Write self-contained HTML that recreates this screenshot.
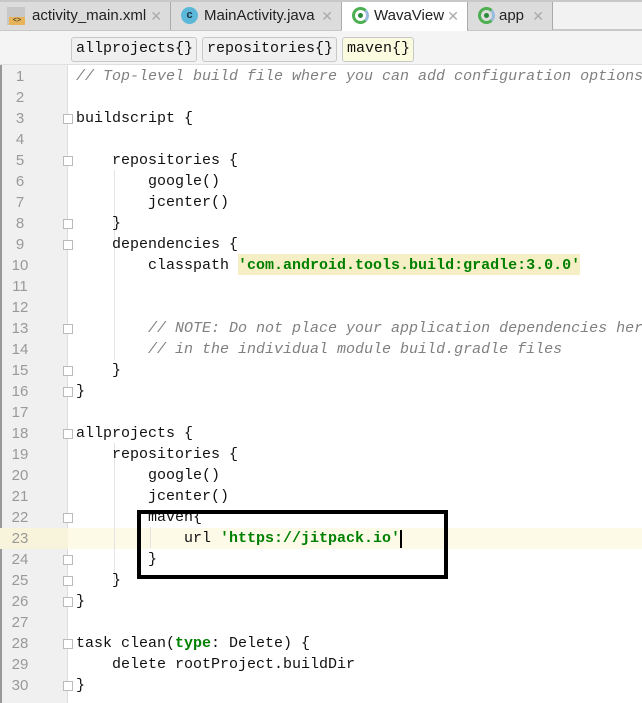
<!DOCTYPE html>
<html><head><meta charset="utf-8"><style>
*{margin:0;padding:0;box-sizing:border-box}
body{width:642px;height:703px;overflow:hidden;background:#fff;position:relative;font-family:"Liberation Mono",monospace}
.tabs{position:absolute;left:0;top:0;width:642px;height:31px;background:#f2f2f2;border-top:2px solid #c8c8c8;border-bottom:2px solid #c8c8c8}
.tab{position:absolute;top:0;height:28px;background:#dcdcdc;border-right:1px solid #aaa;font:15px "Liberation Sans",sans-serif;color:#222;line-height:28px}
.tab .x{color:#aaa;font-size:14px;position:absolute;right:8px;top:0}
.crumbs{position:absolute;left:0;top:31px;width:642px;height:34px;background:#f4f4f4;border-bottom:1px solid #e0e0e0}
.cb{position:absolute;top:6px;height:25px;border:1px solid #c8c8c8;border-radius:3px;background:#f0f0f0;font-size:15px;line-height:22px;padding-left:4px;color:#111}
.gut{position:absolute;left:0;top:65px;width:68px;height:638px;background:#f0f0f0;border-left:2px solid #999;border-right:1px solid #ddd}
.ln{position:absolute;left:0;width:40px;text-align:center;font:15px "Liberation Sans",sans-serif;color:#999;height:21px;line-height:21px}
.code{position:absolute;left:76px;white-space:pre;font-size:15px;line-height:21px;height:21px;color:#111}
.c{color:#808080;font-style:italic}
.s{color:#008000;font-weight:bold}
.fold{position:absolute;left:63px;width:10px;height:10px;border:1px solid #bbb;background:#fff}
.guide{position:absolute;width:1px;background:#e4e4e4}
</style></head><body>
<div class="tabs">
 <div class="tab" style="left:0;width:171px"><span style="position:absolute;left:7px;top:5px;width:18px;height:18px;background:#c8c8c8"></span><span style="position:absolute;left:9px;top:15px;width:16px;height:8px;background:#e8b45a;font-size:7px;line-height:8px;text-align:center">&lt;&gt;</span><span style="position:absolute;left:32px">activity_main.xml</span><span class="x">✕</span></div>
 <div class="tab" style="left:171px;width:171px"><span style="position:absolute;left:10px;top:5px;width:17px;height:17px;border-radius:50%;background:#5bb8d8;color:#234;font-size:11px;line-height:17px;text-align:center;font-weight:bold">c</span><span style="position:absolute;left:33px">MainActivity.java</span><span class="x">✕</span></div>
 <div class="tab" style="left:342px;width:126px;background:#fff;height:30px"><span style="position:absolute;left:10px;top:5px;width:17px;height:17px;border-radius:50%;border:3px solid #4caf50;border-right-color:#9bd"></span><span style="position:absolute;left:16px;top:11px;width:5px;height:5px;border-radius:50%;background:#2a8a3a"></span><span style="position:absolute;left:32px">WavaView</span><span class="x">✕</span></div>
 <div class="tab" style="left:468px;width:85px"><span style="position:absolute;left:10px;top:5px;width:17px;height:17px;border-radius:50%;border:3px solid #4caf50;border-right-color:#9bd"></span><span style="position:absolute;left:16px;top:11px;width:5px;height:5px;border-radius:50%;background:#2a8a3a"></span><span style="position:absolute;left:31px">app</span><span class="x">✕</span></div>
</div>
<div class="crumbs">
 <div class="cb" style="left:71px;width:126px">allprojects{}</div>
 <div class="cb" style="left:202px;width:135px">repositories{}</div>
 <div class="cb" style="left:342px;width:72px;background:#fbfbe0">maven{}</div>
</div>
<div class="gut"></div>
<div style="position:absolute;left:0;top:528px;width:642px;height:21px;background:#fdfbe8"></div>
<div style="position:absolute;left:0;top:528px;width:68px;height:21px;background:#f8f4dc"></div>
<div style="position:absolute;left:238px;top:254px;width:342px;height:21px;background:#f6efc6"></div>
<div class="guide" style="left:114px;top:443px;height:140px"></div>
<div class="guide" style="left:114px;top:170px;height:190px"></div>
<div class="guide" style="left:150px;top:527px;height:21px"></div>
<div id="L"></div>
<div style="position:absolute;left:137px;top:510px;width:311px;height:69px;border:4px solid #000"></div>
<div style="position:absolute;left:400px;top:530px;width:2px;height:18px;background:#000"></div>
<script>
var lines=[
'<span class="c">// Top-level build file where you can add configuration options</span>','',
'buildscript {','',
'    repositories {','        google()','        jcenter()','    }','    dependencies {',
'        classpath <span class="s">\'com.android.tools.build:gradle:3.0.0\'</span>','','',
'        <span class="c">// NOTE: Do not place your application dependencies here</span>',
'        <span class="c">// in the individual module build.gradle files</span>','    }','}','',
'allprojects {','    repositories {','        google()','        jcenter()','        maven{',
'            url <span class="s">\'https://jitpack.io\'</span>','        }','    }','}','',
'task clean(<span class="s">type</span>: Delete) {','    delete rootProject.buildDir','}'];
var folds=[3,5,8,9,13,15,16,18,22,24,25,26,28,30];
var h='';
for(var i=0;i<lines.length;i++){var t=66+i*21;
h+='<div class="ln" style="top:'+t+'px">'+(i+1)+'</div><div class="code" style="top:'+t+'px">'+lines[i]+'</div>';}
folds.forEach(function(n){h+='<div class="fold" style="top:'+(66+(n-1)*21+6)+'px"></div>';});
document.getElementById('L').innerHTML=h;
</script>
</body></html>
